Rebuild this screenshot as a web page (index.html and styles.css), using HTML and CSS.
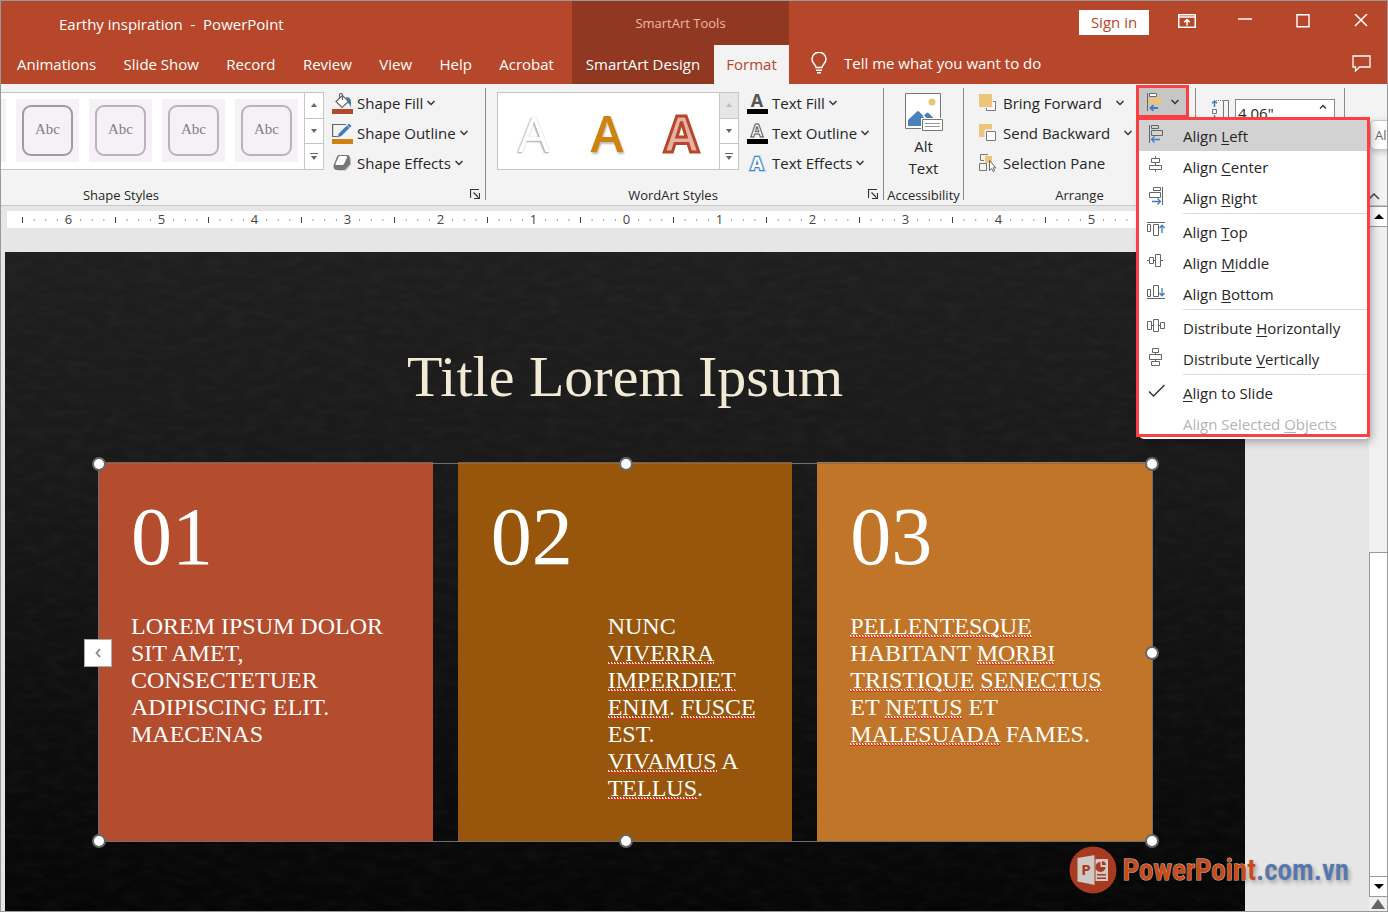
FILE: index.html
```
<!DOCTYPE html>
<html lang="en">
<head>
  <meta charset="UTF-8">
  <meta name="viewport" content="width=device-width, initial-scale=1.0">
  <title>Earthy inspiration - PowerPoint</title>
  <link rel="stylesheet" href="styles.css">
</head>
<body>

  <!-- Shared icons -->
  <svg class="defs" width="0" height="0" aria-hidden="true">
    <symbol id="chev" viewBox="0 0 8 6"><path d="M.5 1L4 4.500 7.500 1" fill="none" stroke="#333" stroke-width="1.500"/></symbol>
    <symbol id="up" viewBox="0 0 8 4"><path d="M1 4l3-4 3 4z" fill="currentColor"/></symbol>
    <symbol id="down" viewBox="0 0 8 4"><path d="M1 0l3 4 3-4z" fill="currentColor"/></symbol>
    <symbol id="more" viewBox="0 0 8 7"><path d="M0 .5h8" stroke="currentColor"/><path d="M1 3l3 4 3-4z" fill="currentColor"/></symbol>
    <symbol id="launch" viewBox="0 0 10 10"><path d="M.5 9V.5H9M3.500 3.500l5 5M9.500 4v5.500H4" fill="none" stroke="#333" stroke-width="1.200"/></symbol>
  </svg>

  <!-- Title bar and tabs -->
  <header class="top">
    <div class="top-left">
      <h1 class="doc-name">Earthy inspiration&nbsp; -&nbsp; PowerPoint</h1>
      <nav class="tabs">
        <button>Animations</button>
        <button>Slide Show</button>
        <button>Record</button>
        <button>Review</button>
        <button>View</button>
        <button>Help</button>
        <button>Acrobat</button>
      </nav>
    </div>
    <div class="context">
      <div class="context-name">SmartArt Tools</div>
      <nav class="context-tabs">
        <button>SmartArt Design</button>
        <button class="active">Format</button>
      </nav>
    </div>
    <div class="top-right">
      <div class="window-buttons">
        <button class="sign-in">Sign in</button>
        <button aria-label="Ribbon display options"><svg width="18" height="14" viewBox="0 0 18 14" fill="none" stroke="#fff" stroke-width="1.500"><path d="M.75.75h16.500v12.500H.75zM1 3h16M9 11.500V6M6.200 8.200L9 5.500l2.800 2.700"/></svg></button>
        <button aria-label="Minimize"><svg width="14" height="14" viewBox="0 0 14 14"><path d="M0 5h14" stroke="#fff" stroke-width="1.500"/></svg></button>
        <button aria-label="Maximize"><svg width="14" height="14" viewBox="0 0 14 14"><path d="M1 0.700h12v12H1z" fill="none" stroke="#fff" stroke-width="1.400"/></svg></button>
        <button aria-label="Close"><svg width="14" height="14" viewBox="0 0 14 14"><path d="M1 0l12 12M13 0L1 12" stroke="#fff" stroke-width="1.500"/></svg></button>
      </div>
      <div class="tell-row">
        <button class="tell-me">
          <svg width="16" height="22" viewBox="0 0 16 22" fill="none" stroke="#fff" stroke-width="1.500"><path d="M5 15.500c0-3-4-4-4-8.300a7 7 0 0 1 14 0c0 4.300-4 5.300-4 8.300zM5 18.300h6M6 20.800h4"/></svg>
          Tell me what you want to do
        </button>
        <button class="comment" aria-label="Comments"><svg width="19" height="17" viewBox="0 0 19 17"><path d="M1 1h17v11H7.500L3.500 16v-4H1z" fill="none" stroke="#fff" stroke-width="1.300"/></svg></button>
      </div>
    </div>
  </header>

  <!-- Ribbon -->
  <section class="ribbon">
    <div class="group shapes">
      <div class="group-body">
        <div class="gallery">
          <div class="thumbs">
            <div class="thumb"></div>
            <button class="thumb dark"><span>Abc</span></button>
            <button class="thumb"><span>Abc</span></button>
            <button class="thumb"><span>Abc</span></button>
            <button class="thumb"><span>Abc</span></button>
          </div>
          <div class="spinner">
            <button aria-label="Previous shape styles"><svg width="8" height="4"><use href="#up"/></svg></button>
            <button aria-label="Next shape styles"><svg width="8" height="4"><use href="#down"/></svg></button>
            <button aria-label="More shape styles"><svg width="8" height="7"><use href="#more"/></svg></button>
          </div>
        </div>
        <div class="commands">
          <button>
            <svg width="21" height="21" viewBox="0 0 21 21"><path d="M0 16h21v5H0z" fill="#b7472a"/><path d="M14 4q5 0 5 5v6q-1-4-3-5z" fill="#3e7cbf"/><path d="M4 8.500L10.500 2.500l6 6-6.500 6z" fill="#fff" stroke="#666" stroke-width="1.200"/><path d="M7.500 5.500V2q0-1.500 1.500-1.500t1.500 1.500v5" fill="none" stroke="#666" stroke-width="1.200"/></svg>
            Shape Fill <svg width="8" height="6"><use href="#chev"/></svg>
          </button>
          <button>
            <svg width="21" height="21" viewBox="0 0 21 21"><path d="M0 16h21v5H0z" fill="#cf830f"/><path d="M14 1.500H.6v12h5" fill="none" stroke="#666" stroke-width="1.200"/><path d="M5.500 14.500l1.300-4L17 .5l2.500 2.500L9.300 13z" fill="#3e7cbf"/><path d="M15 2.200l2.500 2.500" stroke="#fff" stroke-width=".8"/></svg>
            Shape Outline <svg width="8" height="6"><use href="#chev"/></svg>
          </button>
          <button>
            <svg width="21" height="21" viewBox="0 0 21 21"><path d="M3 15l3 2.500h8l5-6V6l-2-3z" fill="#bbb"/><path d="M1.500 12.500L5 3.500Q5.500 2 7 2h8q1.500 0 2.500 1l.5 8-4.500 5q-1 1-2 1H5q-3.500 0-3.500-4.500z" fill="#777"/><path d="M3.500 11L6.500 4q.5-1 1.500-1h6q1.500 0 1 1.500L12 11q-.5 1-1.500 1H4.500q-1.500 0-1-1z" fill="#fff"/></svg>
            Shape Effects <svg width="8" height="6"><use href="#chev"/></svg>
          </button>
        </div>
      </div>
      <div class="group-label">Shape Styles</div>
      <button class="launcher" aria-label="Format shape"><svg width="10" height="10"><use href="#launch"/></svg></button>
    </div>

    <div class="group wordart">
      <div class="group-body">
        <div class="gallery">
          <div class="letters">
            <button class="wa wa-white">A</button>
            <button class="wa wa-gold">A</button>
            <button class="wa wa-red">A</button>
          </div>
          <div class="spinner">
            <button disabled aria-label="Previous WordArt styles"><svg width="8" height="4"><use href="#up"/></svg></button>
            <button aria-label="Next WordArt styles"><svg width="8" height="4"><use href="#down"/></svg></button>
            <button aria-label="More WordArt styles"><svg width="8" height="7"><use href="#more"/></svg></button>
          </div>
        </div>
        <div class="commands">
          <button>
            <svg class="letter-icon" width="21" height="21" viewBox="0 0 21 21"><path d="M0 16h21v5H0z"/><text x="10" y="14" fill="#555">A</text></svg>
            Text Fill <svg width="8" height="6"><use href="#chev"/></svg>
          </button>
          <button>
            <svg class="letter-icon" width="21" height="21" viewBox="0 0 21 21"><path d="M0 16h21v5H0z"/><text x="10" y="14" fill="#fff" stroke="#555">A</text></svg>
            Text Outline <svg width="8" height="6"><use href="#chev"/></svg>
          </button>
          <button>
            <svg class="letter-icon" width="21" height="21" viewBox="0 0 21 21"><text x="10" y="17" fill="#b9d6f2" stroke="#b9d6f2" stroke-width="4">A</text><text x="10" y="17" fill="#fff" stroke="#3e7cbf" stroke-width="2" paint-order="stroke">A</text></svg>
            Text Effects <svg width="8" height="6"><use href="#chev"/></svg>
          </button>
        </div>
      </div>
      <div class="group-label">WordArt Styles</div>
      <button class="launcher" aria-label="Format text effects"><svg width="10" height="10"><use href="#launch"/></svg></button>
    </div>

    <div class="group access">
      <button class="alt-text">
        <svg width="38" height="38" viewBox="0 0 38 38"><path d="M.5.5h35v35H.5z" fill="#fff" stroke="#777"/><circle cx="27" cy="9" r="3.500" fill="#edc57a"/><path d="M3 33v-6l9-8.500q1-1 2 0l4.500 4.500 3-3q1-1 2 0l6 6v7z" fill="#4a80bb"/><path d="M18 22.500l3 3" stroke="#fff" stroke-width="1.500"/><path d="M16 25h22v13H16z" fill="#fff"/><path d="M17.500 26.500h20v11h-20z" fill="#fff" stroke="#777"/><path d="M20 30.500h15M20 33.500h15" stroke="#999"/></svg>
        Alt<br>Text
      </button>
      <div class="group-label">Accessibility</div>
    </div>

    <div class="group arrange">
      <div class="group-body">
        <div class="commands wide">
          <button>
            <svg width="17" height="18" viewBox="0 0 17 18"><path d="M7.500 7.500h9v9h-9z" fill="#fff" stroke="#777"/><path d="M0 0h14v14H0z" fill="#f3f3f3"/><path d="M0 0h13v13H0z" fill="#edc57a"/></svg>
            Bring Forward <svg width="8" height="6"><use href="#chev"/></svg>
          </button>
          <button>
            <svg width="17" height="18" viewBox="0 0 17 18"><path d="M0 0h13v13H0z" fill="#edc57a"/><path d="M7 7h10v10H7z" fill="#fff" stroke="#f3f3f3" stroke-width="3"/><path d="M7.500 7.500h9v9h-9z" fill="#fff" stroke="#777"/></svg>
            Send Backward <svg width="8" height="6"><use href="#chev"/></svg>
          </button>
          <button>
            <svg width="17" height="18" viewBox="0 0 17 18"><path d="M6 2h7v7H6z" fill="#edc57a"/><path d="M9 .5H1.500v6H5M.5 9.500h7v7h-7z" fill="none" stroke="#777"/><path d="M10.500 6.500v10l2.200-2 1.500 3 1.500-.8-1.500-2.900h2.600z" fill="#fff" stroke="#666"/></svg>
            Selection Pane
          </button>
        </div>

        <div class="align">
          <button class="align-button" aria-label="Align">
            <svg width="14" height="18" viewBox="0 0 14 18"><path d="M.5 0v18M2.500.5h7v3h-7z" fill="#fff" stroke="#666"/><path d="M2 5h12v6H2z" fill="#edc57a"/><path d="M11 15H3.500M6.500 12.200L3.500 15l3 2.800" fill="none" stroke="#3e7cbf" stroke-width="1.800"/></svg>
            <svg width="8" height="6"><use href="#chev"/></svg>
          </button>
          <div class="menu" role="menu">
            <button role="menuitem" class="hover"><svg width="18" height="18" viewBox="0 0 18 18" fill="none" stroke="#666"><path d="M2.500 0v18M4.500.5h7v3h-7zM4.500 5.500h11v5h-11z"/><path d="M13 14.500H4.500M7.500 11.500l-3 3 3 3" stroke="#3e7cbf" stroke-width="1.300"/></svg><span>Align <u>L</u>eft</span></button>
            <button role="menuitem"><svg width="18" height="18" viewBox="0 0 18 18" fill="none" stroke="#666"><path d="M8.500 0v2M4.500 2.500h8v4h-8zM8.500 7v2M2.500 9.500h12v4h-12zM8.500 14v2"/></svg><span>Align <u>C</u>enter</span></button>
            <button role="menuitem"><svg width="18" height="18" viewBox="0 0 18 18" fill="none" stroke="#666"><path d="M15.500 0v18M6.500.5h7v3h-7zM2.500 5.500h11v5h-11z"/><path d="M5 14.500h8.500M10.500 11.500l3 3-3 3" stroke="#3e7cbf" stroke-width="1.300"/></svg><span>Align <u>R</u>ight</span></button>
            <hr>
            <button role="menuitem"><svg width="18" height="18" viewBox="0 0 18 18" fill="none" stroke="#666"><path d="M0 1.500h18M.5 3.500h3v7h-3zM6.500 3.500h5v11h-5z"/><path d="M15 12V4M12.500 7L15 4.300 17.500 7" stroke="#3e7cbf" stroke-width="1.300"/></svg><span>Align <u>T</u>op</span></button>
            <button role="menuitem"><svg width="18" height="18" viewBox="0 0 18 18" fill="none" stroke="#666"><path d="M0 8.500h2M2.500 5.500h4v6h-4zM7 8.500h1M8.500 2.500h5v12h-5zM14 8.500h2"/></svg><span>Align <u>M</u>iddle</span></button>
            <button role="menuitem"><svg width="18" height="18" viewBox="0 0 18 18" fill="none" stroke="#666"><path d="M0 15.500h18M.5 6.500h3v7h-3zM6.500 2.500h5v11h-5z"/><path d="M15 5v8M12.500 10l2.500 2.700L17.500 10" stroke="#3e7cbf" stroke-width="1.300"/></svg><span>Align <u>B</u>ottom</span></button>
            <hr>
            <button role="menuitem"><svg width="18" height="18" viewBox="0 0 18 18" fill="none" stroke="#666"><path d="M.5 4.500h4v8h-4zM5 8.500h1M6.500 2.500h5v12h-5zM12 8.500h1M13.500 5.500h4v6h-4z"/></svg><span>Distribute <u>H</u>orizontally</span></button>
            <button role="menuitem"><svg width="18" height="18" viewBox="0 0 18 18" fill="none" stroke="#666"><path d="M5.500.5h6v4h-6zM8.500 5v1M2.500 6.500h12v5h-12zM8.500 12v1M4.500 13.500h8v4h-8z"/></svg><span>Distribute <u>V</u>ertically</span></button>
            <hr>
            <button role="menuitem"><svg width="18" height="18" viewBox="0 0 18 18" fill="none" stroke="#333" stroke-width="1.500"><path d="M2 9.500l4.500 4.500L17.500 3"/></svg><span><u>A</u>lign to Slide</span></button>
            <button role="menuitem" disabled><svg width="18" height="18"></svg><span>Align Selected <u>O</u>bjects</span></button>
          </div>
          <div class="tooltip">Al</div>
        </div>
      </div>
      <div class="group-label">Arrange</div>
    </div>

    <div class="group size">
      <label for="height" aria-label="Height"><svg width="18" height="20" viewBox="0 0 18 20" fill="none" stroke="#777"><path d="M1.500 10.500h4v4h-4zM12.500 1.500h5v17h-5z"/><path d="M5 1.500h7" stroke-dasharray="1 1"/><path d="M3.500 8V2M1 4.300L3.500 2 6 4.300M3.500 16v3" stroke="#3e7cbf" stroke-width="1.500"/></svg></label>
      <div class="number">
        <input id="height" type="text" value="4.06&quot;">
        <svg width="8" height="6" viewBox="0 0 8 6"><path d="M1 4.500l3-3 3 3" fill="none" stroke="#333" stroke-width="1.300"/></svg>
      </div>
    </div>
    <button class="collapse" aria-label="Collapse the ribbon"><svg width="12" height="8" viewBox="0 0 12 8"><path d="M1 7l5-5 5 5" fill="none" stroke="#444" stroke-width="1.500"/></svg></button>
  </section>

  <!-- Editing area -->
  <main class="workspace">
    <div class="canvas">
      <div class="ruler">
        <span>6</span><span>5</span><span>4</span><span>3</span><span>2</span><span>1</span><span>0</span><span>1</span><span>2</span><span>3</span><span>4</span><span>5</span>
      </div>

      <article class="slide">
        <svg class="texture" width="100%" height="100%" aria-hidden="true">
          <filter id="grain"><feTurbulence type="fractalNoise" baseFrequency="0.05 0.12" numOctaves="5" seed="7"/><feColorMatrix values="0 0 0 0 1  0 0 0 0 1  0 0 0 0 1  1 0 0 0 -0.35"/></filter>
          <rect width="100%" height="100%" filter="url(#grain)"/>
        </svg>
        <h2>Title Lorem Ipsum</h2>
        <div class="cards">
          <section class="card rust">
            <h3>01</h3>
            <p>LOREM IPSUM DOLOR<br>SIT AMET,<br>CONSECTETUER<br>ADIPISCING ELIT.<br>MAECENAS</p>
          </section>
          <section class="card brown">
            <h3>02</h3>
            <p>NUNC<br><span class="typo">VIVERRA</span><br><span class="typo">IMPERDIET</span><br><span class="typo">ENIM</span>. <span class="typo">FUSCE</span><br>EST.<br><span class="typo">VIVAMUS</span> A<br><span class="typo">TELLUS</span>.</p>
          </section>
          <section class="card orange">
            <h3>03</h3>
            <p><span class="typo">PELLENTESQUE</span><br>HABITANT <span class="typo">MORBI</span><br><span class="typo">TRISTIQUE</span> <span class="typo">SENECTUS</span><br>ET <span class="typo">NETUS</span> ET<br><span class="typo">MALESUADA</span> FAMES.</p>
          </section>
          <div class="selection">
            <i class="handle nw"></i><i class="handle n"></i><i class="handle ne"></i><i class="handle e"></i>
            <i class="handle sw"></i><i class="handle s"></i><i class="handle se"></i>
            <button class="text-pane" aria-label="Show text pane"><svg width="6" height="10" viewBox="0 0 6 10"><path d="M5 1L1.500 5 5 9" fill="none" stroke="#888" stroke-width="1.800"/></svg></button>
          </div>
        </div>
      </article>

      <div class="watermark">
        <svg width="48" height="48" viewBox="0 0 48 48"><circle cx="24" cy="24" r="23.500" fill="#a73a20"/><path d="M25 13h14v22H25z" fill="#d0c8c5"/><path d="M8.500 12L26 9v30L8.500 35.500z" fill="#d0c8c5"/><path d="M26 9v30" stroke="#a73a20"/><text x="17" y="29" class="logo-letter">P</text><path d="M31.500 16v5h5a5 5 0 1 1-5-5z" fill="#a73a20"/><path d="M33 15a4.500 4.500 0 0 1 4 4h-4zM28 28h9v1.500h-9zM28 31.500h9V33h-9z" fill="#a73a20"/></svg>
        <span class="mark-name">PowerPoint<b>.com.vn</b></span>
      </div>
    </div>

    <div class="scrollbar">
      <button aria-label="Scroll up"><svg width="10" height="5" viewBox="0 0 8 4" preserveAspectRatio="none"><path d="M0 4l4-4 4 4z"/></svg></button>
      <div class="track"><div class="thumb-bar"></div></div>
      <button aria-label="Scroll down"><svg width="10" height="5" viewBox="0 0 8 4" preserveAspectRatio="none"><path d="M0 0l4 4 4-4z"/></svg></button>
      <button class="prev" aria-label="Previous slide"><svg width="14" height="10" viewBox="0 0 14 10"><path d="M7 0l7 10H0z" fill="#666"/></svg></button>
    </div>
  </main>

</body>
</html>
```
FILE: styles.css
```
* {
  box-sizing: border-box;
}

body {
  margin: 0;
  height: 100vh;
  display: flex;
  flex-direction: column;
  overflow: hidden;
  border: 1px solid #999;
  background: #e6e6e6;
  color: #262626;
  font-family: "Open Sans", "Noto Sans", sans-serif;
  font-size: 15px;
}

button {
  padding: 0;
  border: 0;
  background: none;
  color: inherit;
  font: inherit;
  white-space: nowrap;
}

svg {
  flex: none;
  display: block;
}

.defs {
  position: absolute;
}

/* Title bar and tabs */
.top {
  display: grid;
  grid-template-columns: 571px 217px 1fr;
  height: 83px;
  flex: none;
  background: #b7472a;
  color: #fff;
}

.doc-name {
  margin: 0;
  height: 44px;
  padding-left: 58px;
  font-size: 15px;
  font-weight: 400;
  line-height: 46px;
}

.tabs {
  display: flex;
  justify-content: space-between;
  height: 39px;
  padding: 0 18px 2px 16px;
}

.context {
  background: #913823;
}

.context-name {
  height: 44px;
  line-height: 44px;
  text-align: center;
  font-size: 13px;
  color: #f0b8a6;
}

.context-tabs {
  display: flex;
  height: 39px;
}

.context-tabs button {
  flex: 1;
  padding-bottom: 2px;
}

.context-tabs .active {
  flex: none;
  width: 75px;
  background: #f3f3f3;
  color: #b7472a;
}

.window-buttons {
  display: flex;
  align-items: center;
  justify-content: flex-end;
  gap: 38px;
  height: 39px;
  padding: 3px 16px 0 0;
}

.window-buttons button {
  width: 20px;
  display: flex;
  justify-content: center;
}

.window-buttons button svg {
  margin-bottom: 2px;
}

.window-buttons .sign-in {
  width: 70px;
  height: 25px;
  margin-right: -10px;
  align-items: center;
  background: #fff;
  color: #b7472a;
}

.tell-row {
  display: flex;
  align-items: center;
  justify-content: space-between;
  height: 44px;
  padding: 2px 16px 0 22px;
}

.tell-me {
  display: flex;
  align-items: center;
  gap: 17px;
}

/* Ribbon */
.ribbon {
  position: relative;
  z-index: 2;
  display: flex;
  flex: none;
  height: 122px;
  background: #f3f3f3;
  border-bottom: 1px solid #c8c8c8;
}

.group {
  position: relative;
  flex: none;
  height: 112px;
  margin-top: 4px;
  border-right: 1px solid #8a8a8a;
}

.shapes { width: 485px; }
.wordart { width: 398px; }
.access { width: 80px; }
.arrange { width: 232px; }
.size { width: 149px; }

.group-body {
  display: flex;
  gap: 8px;
  height: 97px;
}

.group-label {
  height: 20px;
  line-height: 20px;
  text-align: center;
  font-size: 13px;
}

.shapes .group-label {
  width: 240px;
}

.wordart .group-label {
  width: 374px;
}

.launcher {
  position: absolute;
  right: 5px;
  bottom: 1px;
}

.gallery {
  display: flex;
  height: 78px;
  margin-top: 4px;
  border: 1px solid #c6c6c6;
  background: #fff;
}

.shapes .gallery {
  width: 323px;
  border-left: 0;
}

.wordart .gallery {
  width: 242px;
  margin-left: 11px;
}

.thumbs {
  flex: 1;
  min-width: 0;
  display: flex;
  justify-content: flex-end;
  gap: 10px;
  padding: 6px 6px 0 0;
  overflow: hidden;
}

.thumb {
  flex: none;
  width: 63px;
  height: 63px;
  padding: 6px;
  background: #f6f1f7;
}

.thumb span {
  display: block;
  height: 51px;
  border: 2px solid #b8b4b9;
  border-radius: 9px;
  color: #808080;
  font-family: "Liberation Serif", serif;
  font-size: 15px;
  line-height: 44px;
}

.thumb.dark span {
  border-color: #9f9ba0;
}

.spinner {
  width: 19px;
  display: flex;
  flex-direction: column;
  border-left: 1px solid #c6c6c6;
  color: #666;
}

.spinner button {
  flex: 1;
  display: flex;
  align-items: center;
  justify-content: center;
}

.spinner button + button {
  border-top: 1px solid #c6c6c6;
}

.spinner button:disabled {
  background: #e6e6e6;
  color: #bbb;
}

.letters {
  flex: 1;
  display: flex;
  justify-content: space-around;
  align-items: center;
}

.wa {
  font-size: 50px;
  line-height: 60px;
  padding-top: 4px;
}

.wa-white {
  color: #fff;
  text-shadow: 0 0 1px #bbb, -1px 1px 2px #999;
}

.wa-gold {
  color: #cf830f;
  font-weight: 600;
  text-shadow: 1px 2px 2px #bbb;
}

.wa-red {
  color: #e8b0a2;
  font-weight: 700;
  -webkit-text-stroke: 3px #b7472a;
}

.letter-icon text {
  font-size: 18px;
  font-weight: 700;
  text-anchor: middle;
}

.commands {
  display: flex;
  flex-direction: column;
}

.commands button {
  display: flex;
  align-items: center;
  gap: 4px;
  height: 30px;
}

.commands.wide {
  width: 157px;
  margin-right: -8px;
}

.commands.wide button {
  gap: 7px;
}

.commands.wide svg + svg {
  margin-left: 7px;
}

.access .alt-text {
  width: 100%;
  height: 97px;
  padding-bottom: 2px;
  line-height: 22px;
}

.alt-text svg {
  margin: 0 auto 4px;
}

.arrange .group-body {
  padding-left: 15px;
}

/* Align drop-down */
.align {
  position: relative;
  width: 53px;
  margin-top: -3px;
}

.align-button {
  display: flex;
  align-items: center;
  justify-content: center;
  gap: 10px;
  width: 53px;
  height: 33px;
  border: 3px solid #f94144;
  background: #c6c6c6;
}

.menu {
  position: absolute;
  z-index: 3;
  top: 35px;
  left: 3px;
  width: 231px;
  background: #fff;
  border-radius: 0 0 5px 5px;
  box-shadow: 2px 3px 8px rgba(0, 0, 0, 0.3);
}

.menu::after {
  content: "";
  position: absolute;
  inset: -3px 0 2px -3px;
  border: 3px solid #f94144;
  pointer-events: none;
}

.menu button {
  display: flex;
  align-items: center;
  gap: 18px;
  width: 100%;
  height: 31px;
  padding-left: 8px;
}

.menu button svg {
  margin-bottom: 3px;
}

.menu button:disabled {
  color: #b4b4b4;
}

.menu .hover {
  background: #d2d2d2;
}

.menu u {
  text-underline-offset: 2px;
}

.menu hr {
  height: 1px;
  margin: 0 0 2px 44px;
  border: 0;
  background: #dcdcdc;
}

.tooltip {
  position: absolute;
  top: 35px;
  left: 234px;
  width: 48px;
  padding-left: 4px;
  border: 1px solid #c6c6c6;
  border-radius: 5px;
  background: #fff;
  color: #666;
  font-size: 13px;
  line-height: 28px;
  box-shadow: 1px 2px 6px rgba(0, 0, 0, 0.2);
}

.size {
  display: flex;
  gap: 6px;
  padding: 11px 9px 0 15px;
}

.number {
  flex: 1;
  display: flex;
  height: 26px;
  padding-right: 7px;
  border: 1px solid #8a8a8a;
  background: #fff;
}

.number input {
  width: 100%;
  min-width: 0;
  padding: 2px 2px 0;
  border: 0;
  background: none;
  color: inherit;
  font: inherit;
}

.number svg {
  margin-top: 4px;
}

.collapse {
  margin: auto 7px 5px auto;
}

/* Editing area */
.workspace {
  flex: 1;
  min-height: 0;
  display: flex;
}

.canvas {
  position: relative;
  flex: 1;
  display: flex;
  flex-direction: column;
  padding: 5px 124px 0 4px;
}

.ruler {
  display: flex;
  flex: none;
  height: 17px;
  margin-left: 2px;
  padding-left: 15px;
  background: #fff;
}

.ruler span {
  width: 93px;
  text-align: center;
  font-size: 13px;
  line-height: 17px;
  color: #444;
  background:
    linear-gradient(#444, #444) 0 50% / 1px 6px no-repeat,
    linear-gradient(#fff, #fff) 50% 50% / 12px 17px no-repeat,
    linear-gradient(to right, #999 1px, transparent 1px) 0 50% / calc(100% / 8) 2px repeat-x;
}

.slide {
  position: relative;
  flex: 1;
  margin-top: 24px;
  overflow: hidden;
  background: linear-gradient(#1f1f1f, #191919 35%, #0d0d0d 75%, #060606);
  color: #fff;
  font-family: "Liberation Serif", serif;
}

.texture {
  position: absolute;
  inset: 0;
  opacity: 0.05;
}

.slide h2 {
  position: relative;
  height: 210px;
  margin: 0;
  padding-top: 93px;
  text-align: center;
  font-size: 58px;
  font-weight: 400;
  line-height: 64px;
  color: #f3ead6;
}

.cards {
  position: relative;
  display: grid;
  grid-template-columns: repeat(3, 1fr);
  gap: 25px;
  margin: 0 93px;
}

.card {
  min-height: 380px;
  padding: 29px 33px 0;
}

.rust { background: #b44c2e; }
.brown { background: #97560b; }
.orange { background: #c17529; }

.card h3 {
  margin: 0 0 30px;
  font-size: 82px;
  font-weight: 400;
  line-height: 92px;
}

.card p {
  margin: 0;
  font-size: 24px;
  line-height: 27px;
  white-space: nowrap;
}

.brown p {
  margin-left: 117px;
}

/* Spelling marks: a light dotted row over a red one */
.typo {
  background:
    linear-gradient(to right, #fff 1px, transparent 1px) 0 calc(100% - 3px) / 3px 1px repeat-x,
    linear-gradient(to right, #f6c9b8 2px, #e22 2px) 0 calc(100% - 2px) / 3px 1px repeat-x,
    linear-gradient(to right, #e22 2px, transparent 2px) 0 calc(100% - 1px) / 3px 1px repeat-x;
}

.selection {
  position: absolute;
  inset: 1px -1px 0 0;
  border: 1px solid #707070;
  pointer-events: none;
}

.handle {
  position: absolute;
  width: 14px;
  height: 14px;
  margin: -7px;
  border: 2px solid #666;
  border-radius: 50%;
  background: #fff;
}

.nw { left: 0; top: 0; }
.n { left: 50%; top: 0; }
.ne { left: 100%; top: 0; }
.e { left: 100%; top: 50%; }
.sw { left: 0; top: 100%; }
.s { left: 50%; top: 100%; }
.se { left: 100%; top: 100%; }

.text-pane {
  position: absolute;
  left: -15px;
  top: 50%;
  display: flex;
  align-items: center;
  justify-content: center;
  width: 28px;
  height: 28px;
  margin-top: -14px;
  border: 1px solid #aaa;
  background: #fff;
}

.watermark {
  position: absolute;
  right: 20px;
  bottom: 17px;
  display: flex;
  align-items: center;
  gap: 6px;
}

.logo-letter {
  fill: #a73a20;
  font-family: "Open Sans", sans-serif;
  font-size: 15px;
  font-weight: 700;
  text-anchor: middle;
}

.mark-name {
  color: #cc4a16;
  font-family: "Roboto Condensed", "Liberation Sans Narrow", sans-serif;
  font-size: 29px;
  font-weight: 600;
  line-height: 36px;
  paint-order: stroke;
  -webkit-text-stroke: 1px #d8d4d2;
  text-shadow: 2px 3px 4px rgba(0, 0, 0, 0.3);
}

.mark-name b {
  color: #5577ad;
  font-weight: 600;
}

/* Scroll bar */
.scrollbar {
  flex: none;
  display: flex;
  flex-direction: column;
  width: 18px;
  background: #f0f0f0;
}

.scrollbar button {
  flex: none;
  display: flex;
  align-items: center;
  justify-content: center;
  height: 21px;
  border: 1px solid #999;
  border-right: 0;
  background: #fff;
  color: #111;
}

.track {
  flex: 1;
  display: flex;
  flex-direction: column;
  justify-content: flex-end;
}

.thumb-bar {
  height: 50%;
  border: 1px solid #999;
  border-width: 1px 0 0 1px;
  background: #fff;
}

.scrollbar .prev {
  height: 14px;
  border: 0;
  background: none;
}
```
